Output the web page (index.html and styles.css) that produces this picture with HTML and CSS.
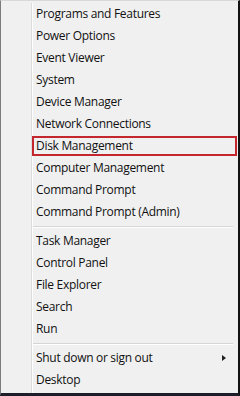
FILE: index.html
```html
<!DOCTYPE html>
<html>
<head>
    <meta charset="utf-8">
    <title>Quick Link Menu</title>
    <link rel="stylesheet" href="styles.css">
</head>
<body>
    <div class="menu">
        <div class="list">
            <div class="item">Programs and Features</div>
            <div class="item">Power Options</div>
            <div class="item">Event Viewer</div>
            <div class="item">System</div>
            <div class="item">Device Manager</div>
            <div class="item">Network Connections</div>
            <div class="item selected">Disk Management</div>
            <div class="item">Computer Management</div>
            <div class="item">Command Prompt</div>
            <div class="item">Command Prompt (Admin)</div>

            <div class="separator"></div>

            <div class="item">Task Manager</div>
            <div class="item">Control Panel</div>
            <div class="item">File Explorer</div>
            <div class="item">Search</div>
            <div class="item">Run</div>

            <div class="separator"></div>

            <div class="item submenu">Shut down or sign out <span class="arrow"></span></div>
            <div class="item">Desktop</div>
        </div>
    </div>
</body>
</html>
```

FILE: styles.css
```css
body {
    margin: 0;
    background-color: #1c1f2a;
}

.menu {
    box-sizing: border-box;
    width: 240px;
    height: 396px;
    background-color: #f0f0f0;
    border-left: 1px solid #7c7c7c;
    border-top: 1px solid #d8d8d8;
    border-right: 2px solid #121212;
    border-bottom: 3px solid #1c1f2a;
    padding: 2px 0 0 30px;
    display: flex;
}

.list {
    flex: 1;
    border-left: 1px solid #dcdcdc;
    box-shadow: inset 1px 0 0 #ffffff;
    font-family: "Open Sans", "Noto Sans", sans-serif;
    font-size: 12px;
    letter-spacing: -0.3px;
    color: #111;
}

.item {
    position: relative;
    height: 22px;
    line-height: 22px;
    padding-left: 4px;
    white-space: nowrap;
}

.item.selected {
    height: 16px;
    line-height: 16px;
    margin: 1px 1px 1px 0;
    padding-left: 2px;
    border: 2px solid #c4262e;
}

.separator {
    height: 1px;
    margin: 3px 5px 2px 1px;
    background-color: #d5d5d5;
    border-bottom: 1px solid #ffffff;
}

.arrow {
    position: absolute;
    right: 12px;
    top: 8px;
    border-left: 4px solid #222;
    border-top: 3px solid transparent;
    border-bottom: 3px solid transparent;
}
```
